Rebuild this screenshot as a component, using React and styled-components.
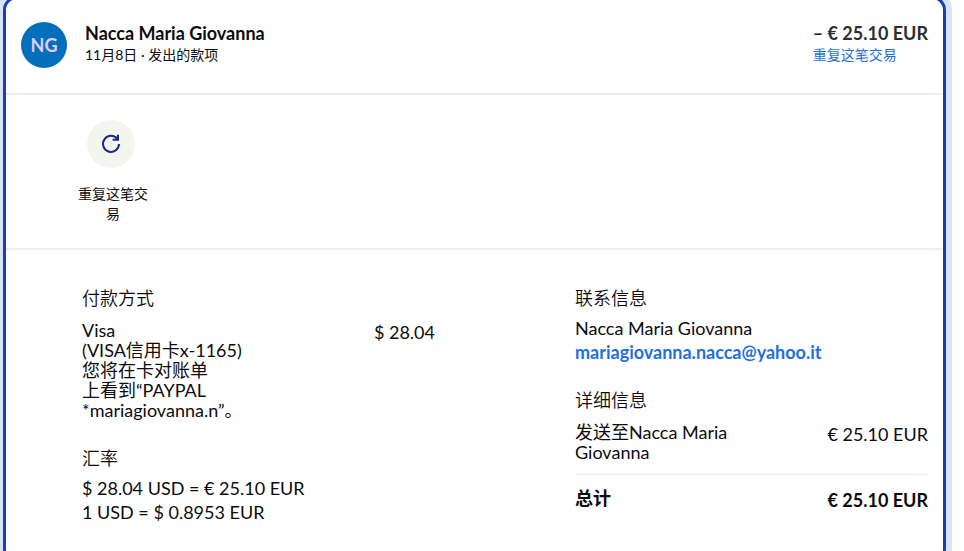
import React from "react";
import styled, { createGlobalStyle } from "styled-components";

const GlobalStyle = createGlobalStyle`
  * {
    box-sizing: border-box;
  }

  body {
    margin: 0;
    background: #ffffff;
    color: #0c0c0d;
    font-family: Lato, "Noto Sans CJK SC", sans-serif;
    font-size: 18px;
    line-height: 24px;
  }

  h2, h3, p, dl, dt, dd, address {
    margin: 0;
    font-style: normal;
  }
`;

const Page = styled.div`
  height: 100vh;
  overflow: hidden;
`;

const Card = styled.main`
  min-height: calc(100vh + 16px);
  margin: -4px 18px 0 3px;
  border: 3px solid #1a3fb4;
  border-radius: 14px;
  box-shadow: 0 0 0 6px #d6e3f8;
`;

const Header = styled.header`
  display: flex;
  align-items: flex-start;
  padding: 23px 15px 25px;
  border-bottom: 2px solid #eeeeec;
`;

const Avatar = styled.div`
  display: flex;
  align-items: center;
  justify-content: center;
  width: 46px;
  height: 46px;
  margin-right: 18px;
  border-radius: 50%;
  background: #0070ba;
  color: #e3cdfb;
  font-weight: 700;
`;

const Summary = styled.div`
  flex: ${props => (props.$grow ? 1 : "none")};
`;

const Title = styled.h2`
  color: ${props => props.$color || "#0c0c0d"};
  font-size: 18px;
  font-weight: 700;
  line-height: 23px;
`;

const Small = styled.p`
  font-size: 14px;
  line-height: 20px;
`;

const Link = styled.a`
  color: #1f6fe0;
  font-weight: ${props => (props.$bold ? 700 : 400)};
  text-decoration: none;
`;

const Actions = styled.section`
  padding: 25px 70px 24px;
  border-bottom: 2px solid #eeeeec;
`;

const RepeatButton = styled.button`
  display: flex;
  flex-direction: column;
  align-items: center;
  gap: 16px;
  width: 74px;
  padding: 0;
  border: 0;
  background: none;
  color: #0c0c0d;
  font-family: inherit;
  font-size: 14px;
  line-height: 20px;
  cursor: pointer;
`;

const Circle = styled.span`
  display: flex;
  align-items: center;
  justify-content: center;
  width: 48px;
  height: 48px;
  margin-right: 4px;
  border-radius: 50%;
  background: #f5f5f0;
`;

const Details = styled.div`
  display: grid;
  grid-template-columns: 1fr 1fr;
  gap: 140px;
  padding: 36px 15px 0 76px;
`;

const Section = styled.section`
  margin-bottom: 24px;
`;

const Heading = styled.h3`
  margin-bottom: ${props => props.$space || "6px"};
  font-size: 18px;
  font-weight: 350;
  line-height: 24px;
`;

const Row = styled.dl`
  display: flex;
  justify-content: space-between;
  padding-bottom: 2px;
`;

const RowWithTotal = styled(Row)`
  padding-bottom: 12px;
`;

const TotalRow = styled(Row)`
  padding-top: 13px;
  border-top: 1px solid #e9ebed;
  font-weight: 700;
`;

const Label = styled.dt`
  width: 160px;
  line-height: 20px;
`;

const Amount = styled.dd`
  white-space: nowrap;
`;

function RepeatIcon() {
  return (
    <svg width="24" height="24" viewBox="0 0 24 24" fill="none" stroke="#182a83" strokeWidth="2" aria-hidden="true">
      <path d="M18.5 7.2A8 8 0 1 0 20 12" />
      <path d="M19 2.8V7.8H13.6" />
    </svg>
  );
}

export default function App() {
  return (
    <Page>
      <GlobalStyle />
      <Card lang="zh-CN">
        <Header>
          <Avatar>NG</Avatar>
          <Summary $grow>
            <Title>Nacca Maria Giovanna</Title>
            <Small>11月8日 · 发出的款项</Small>
          </Summary>
          <Summary>
            <Title $color="#2c2e2f">– € 25.10 EUR</Title>
            <Small>
              <Link href="#repeat">重复这笔交易</Link>
            </Small>
          </Summary>
        </Header>
        <Actions>
          <RepeatButton type="button">
            <Circle>
              <RepeatIcon />
            </Circle>
            重复这笔交易
          </RepeatButton>
        </Actions>
        <Details>
          <div>
            <Section>
              <Heading $space="10px">付款方式</Heading>
              <Row>
                <Label>
                  Visa
                  <br />
                  (VISA信用卡x-1165)
                  <br />
                  您将在卡对账单
                  <br />
                  上看到“PAYPAL
                  <br />
                  *mariagiovanna.n”。
                </Label>
                <Amount>$ 28.04</Amount>
              </Row>
            </Section>
            <Section>
              <Heading>汇率</Heading>
              <p>$ 28.04 USD = € 25.10 EUR</p>
              <p>1 USD = $ 0.8953 EUR</p>
            </Section>
          </div>
          <div>
            <Section>
              <Heading>联系信息</Heading>
              <address>
                Nacca Maria Giovanna
                <br />
                <Link $bold href="mailto:mariagiovanna.nacca@yahoo.it">
                  mariagiovanna.nacca@yahoo.it
                </Link>
              </address>
            </Section>
            <Section>
              <Heading $space="10px">详细信息</Heading>
              <RowWithTotal>
                <Label>发送至Nacca Maria Giovanna</Label>
                <Amount>€ 25.10 EUR</Amount>
              </RowWithTotal>
              <TotalRow>
                <Label>总计</Label>
                <Amount>€ 25.10 EUR</Amount>
              </TotalRow>
            </Section>
          </div>
        </Details>
      </Card>
    </Page>
  );
}
